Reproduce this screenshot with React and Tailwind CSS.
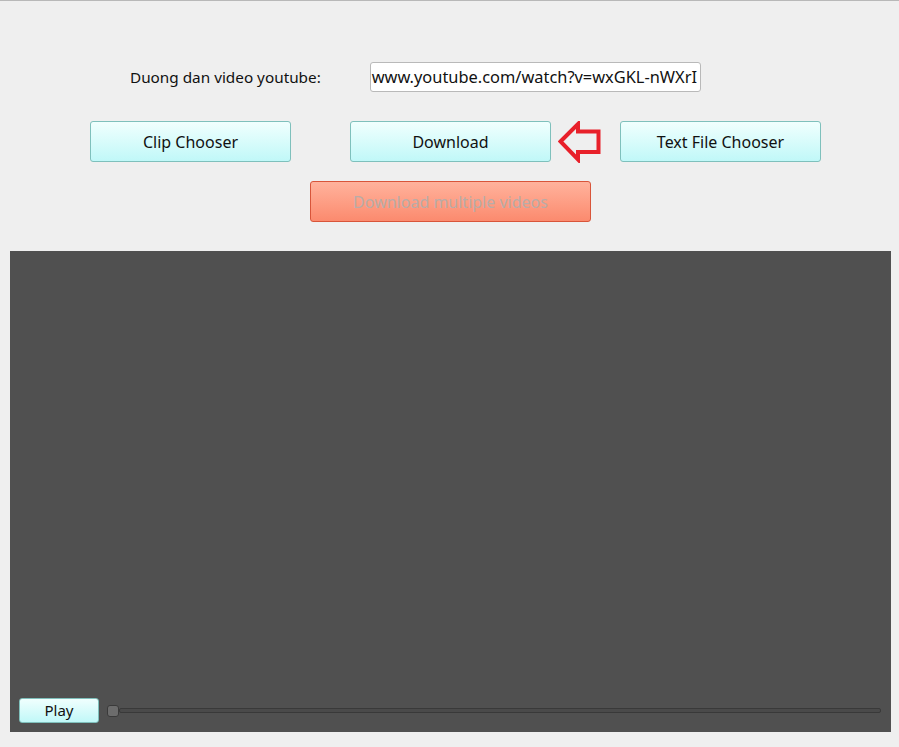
import React from "react";

const cyanBtn =
  "w-[201px] h-[41px] rounded-[3px] border border-[#7fc0bc] bg-gradient-to-b from-[#f0fffe] to-[#c0f8f8] flex items-center justify-center text-[16px] text-[#111]";

export default function App() {
  return (
    <div
      className="w-[899px] h-[747px] bg-[#efefef] border-t border-[#b8b8b8] flex flex-col overflow-hidden"
      style={{ fontFamily: '"Noto Sans", "Open Sans", sans-serif' }}
    >
      <div className="mt-[61px] flex items-center h-[30px]">
        <div className="ml-[130px] w-[240px] text-[15.3px] text-[#111]">Duong dan video youtube:</div>
        <div className="w-[331px] h-[30px] bg-white border border-[#b9b9b9] rounded-[3px] flex items-center justify-end overflow-hidden whitespace-nowrap pr-[3px] text-[16.4px] text-[#111]">
          www.youtube.com/watch?v=wxGKL-nWXrI
        </div>
      </div>

      <div className="mt-[29px] flex items-center h-[41px]">
        <div className={`ml-[90px] ${cyanBtn}`}>Clip Chooser</div>
        <div className={`ml-[59px] ${cyanBtn}`}>Download</div>
        <svg className="ml-[7px]" width="43" height="42" viewBox="0 0 43 42">
          <polygon
            points="2.5,20.5 20,3 20,10.5 40.5,10.5 40.5,31 20,31 20,38.5"
            fill="none"
            stroke="#e8202a"
            strokeWidth="4"
            strokeLinejoin="miter"
          />
        </svg>
        <div className={`ml-[19px] ${cyanBtn}`}>Text File Chooser</div>
      </div>

      <div className="mt-[19px] flex">
        <div className="ml-[310px] w-[281px] h-[41px] rounded-[3px] border border-[#d8553a] bg-gradient-to-b from-[#ffb29c] to-[#fb8a6e] flex items-center justify-center text-[16px] text-[#b8aca8]">
          Download multiple videos
        </div>
      </div>

      <div className="mt-[29px] ml-[10px] w-[881px] h-[481px] bg-[#505050] flex flex-col justify-end">
        <div className="flex items-center pl-[9px] pr-[10px] pb-[9px]">
          <div className="w-[80px] h-[25px] rounded-[3px] border border-[#7fc0bc] bg-gradient-to-b from-[#f0fffe] to-[#c0f8f8] flex items-center justify-center text-[15px] text-[#111]">
            Play
          </div>
          <div className="ml-[8px] flex-1 flex items-center">
            <div className="w-[12px] h-[12px] rounded-[3px] border border-[#3a3a3a] bg-[#6c6c6c] shrink-0"></div>
            <div className="flex-1 h-[5px] border border-[#393939] bg-[#4a4a4a] rounded-[2px]"></div>
          </div>
        </div>
      </div>
    </div>
  );
}
